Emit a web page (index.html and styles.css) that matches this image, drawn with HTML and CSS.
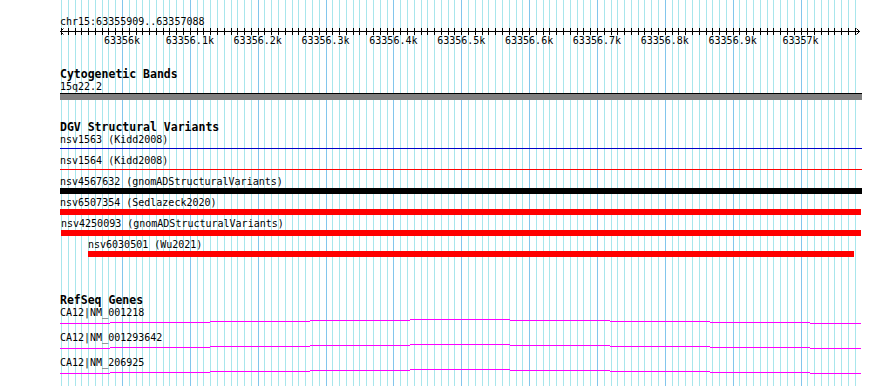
FILE: index.html
```html
<!DOCTYPE html>
<html lang="en">
<head>
    <meta charset="UTF-8">
    <title>Genome Browser - chr15:63355909..63357088</title>
    <link rel="stylesheet" href="styles.css">
</head>
<body>
    <div id="browser">
        <svg id="grid" width="890" height="386"></svg>
        <div id="tracks">
            <div class="locus">chr15:63355909..63357088</div>
            <svg id="ruler" width="802" height="7"></svg>
            <div id="rulerLabels" class="ruler-labels"></div>

            <div class="track cytobands">
                <div class="track-title">Cytogenetic Bands</div>
                <div class="label">15q22.2</div>
                <div class="band"></div>
            </div>

            <div class="track dgv">
                <div class="track-title">DGV Structural Variants</div>
                <div class="sv-row">
                    <div class="label">nsv1563 (Kidd2008)</div>
                    <div class="sv-line blue" style="width: 802px"></div>
                </div>
                <div class="sv-row">
                    <div class="label">nsv1564 (Kidd2008)</div>
                    <div class="sv-line red" style="width: 802px"></div>
                </div>
                <div class="sv-row">
                    <div class="label">nsv4567632 (gnomADStructuralVariants)</div>
                    <div class="sv-bar black" style="width: 802px"></div>
                </div>
                <div class="sv-row">
                    <div class="label">nsv6507354 (Sedlazeck2020)</div>
                    <div class="sv-bar red" style="width: 801px"></div>
                </div>
                <div class="sv-row">
                    <div class="label" style="margin-left: 1px">nsv4250093 (gnomADStructuralVariants)</div>
                    <div class="sv-bar red" style="margin-left: 1px; width: 800px"></div>
                </div>
                <div class="sv-row">
                    <div class="label" style="margin-left: 28px">nsv6030501 (Wu2021)</div>
                    <div class="sv-bar red" style="margin-left: 28px; width: 766px"></div>
                </div>
            </div>

            <div class="track refseq">
                <div class="track-title">RefSeq Genes</div>
                <div class="gene-row">
                    <div class="label">CA12|NM_001218</div>
                    <div class="gene"></div>
                </div>
                <div class="gene-row">
                    <div class="label">CA12|NM_001293642</div>
                    <div class="gene"></div>
                </div>
                <div class="gene-row">
                    <div class="label">CA12|NM_206925</div>
                    <div class="gene"></div>
                </div>
            </div>
        </div>
    </div>
    <script>
        // view: chr15:63355909..63357088, 63356000 sits at x=122
        const scale = 0.6785;
        const origin = 122;
        const left = 60;
        const ns = 'http://www.w3.org/2000/svg';

        function bpToX(bp) {
            return origin + (bp - 63356000) * scale;
        }

        const grid = document.getElementById('grid');
        const ruler = document.getElementById('ruler');
        const rulerLabels = document.getElementById('rulerLabels');

        function rect(svg, x, y, w, h, cls) {
            const r = document.createElementNS(ns, 'rect');
            r.setAttribute('x', x);
            r.setAttribute('y', y);
            r.setAttribute('width', w);
            r.setAttribute('height', h);
            r.setAttribute('class', cls);
            svg.appendChild(r);
        }

        // gridlines + ruler ticks every 10bp
        for (let j = -9; j <= 108; j++) {
            const x = Math.round(bpToX(63356000 + j * 10));
            const major = j % 10 === 0;
            rect(grid, x, 0, 1, 386, major ? 'major' : 'minor');
            rect(ruler, x - left, 0, 1, 7, 'tick');
            if (major) {
                const i = j / 10;
                const span = document.createElement('span');
                span.textContent = i === 0 ? '63356k' : i === 10 ? '63357k' : '63356.' + i + 'k';
                span.style.left = (bpToX(63356000 + j * 10) - left) + 'px';
                rulerLabels.appendChild(span);
            }
        }

        // ruler axis with arrows at both ends
        rect(ruler, 0, 3, 800, 1, 'tick');
        const arrows = document.createElementNS(ns, 'path');
        arrows.setAttribute('d', 'M3.5 0.5 L0.5 3.5 L3.5 6.5 M796.5 0.5 L799.5 3.5 L796.5 6.5');
        arrows.setAttribute('class', 'arrow');
        ruler.appendChild(arrows);

        // gene models: 100px pieces, gently arched
        const pieces = [50, 100, 100, 100, 100, 100, 100, 100, 51];
        const drops = [4, 3, 2, 1, 0, 1, 2, 3, 4];
        document.querySelectorAll('.gene').forEach(gene => {
            pieces.forEach((w, k) => {
                const seg = document.createElement('span');
                seg.style.width = w + 'px';
                seg.style.marginTop = drops[k] + 'px';
                gene.appendChild(seg);
            });
        });
    </script>
</body>
</html>
```

FILE: styles.css
```css
body {
    margin: 0;
    background: #fff;
    color: #000;
    font-family: 'DejaVu Sans Mono', monospace;
    font-size: 10px;
}
#browser {
    position: relative;
    width: 890px;
    height: 386px;
    overflow: hidden;
}
#grid {
    position: absolute;
    top: 0;
    left: 0;
}
#grid .minor {
    fill: #a8e6ec;
}
#grid .major {
    fill: #82c6ec;
}
#tracks {
    position: relative;
    margin-left: 60px;
    width: 802px;
}
.locus {
    padding-top: 16px;
    height: 12px;
    line-height: 12px;
}
#ruler {
    display: block;
}
#ruler .tick {
    fill: #000;
}
#ruler .arrow {
    fill: none;
    stroke: #000;
    stroke-width: 1;
}
.ruler-labels {
    position: relative;
    height: 12px;
    line-height: 12px;
}
.ruler-labels span {
    position: absolute;
    top: 0;
    transform: translateX(-50%);
    white-space: nowrap;
}
.track-title {
    font-weight: bold;
    font-size: 11.5px;
    height: 13px;
    line-height: 13px;
}
.label {
    height: 12px;
    line-height: 12px;
    white-space: nowrap;
}
.cytobands {
    margin-top: 21px;
}
.band {
    height: 6px;
    background: #808080;
    border-top: 1px solid #000;
}
.dgv {
    margin-top: 21px;
}
.sv-row {
    height: 21px;
}
.sv-line {
    height: 1px;
    margin-top: 2px;
}
.sv-bar {
    height: 6px;
}
.blue {
    background: #0000c8;
}
.red {
    background: #ff0000;
}
.black {
    background: #000;
}
.refseq {
    margin-top: 34px;
}
.gene-row {
    height: 25px;
}
.gene {
    display: flex;
    align-items: flex-start;
}
.gene span {
    height: 1px;
    background: #ff00ff;
}
```
